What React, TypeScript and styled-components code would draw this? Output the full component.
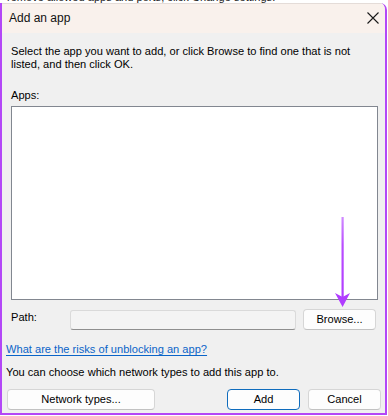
import React from "react";
import styled, { createGlobalStyle } from "styled-components";

const Global = createGlobalStyle`
  html, body { margin: 0; padding: 0; background: #ffffff; }
  body { font-family: "Liberation Sans", Arial, sans-serif; color: #000; }
  * { box-sizing: border-box; }
`;

const Screen = styled.div`
  width: 388px;
  height: 416px;
  background: #ffffff;
  overflow: hidden;
  display: flex;
  flex-direction: column;
`;

const Backdrop = styled.div`
  height: 3px;
  overflow: hidden;
  padding-left: 7px;
  flex: none;
`;

const BackdropText = styled.div`
  font-size: 11.1px;
  line-height: 13px;
  margin-top: -9px;
  white-space: nowrap;
  color: #1a1a1a;
`;

const Window = styled.div`
  position: relative;
  flex: none;
  height: 412px;
  margin-right: 1px;
  border: 2px solid #b347f7;
  border-top: none;
  border-top-right-radius: 7px;
  background: #f0f0f0;
  display: flex;
  flex-direction: column;
  overflow: hidden;
`;

const TitleBar = styled.div`
  height: 30px;
  flex: none;
  background: #f9f1ec;
  display: flex;
  align-items: center;
  justify-content: space-between;
  padding: 0 6px 0 7px;
  border-top: 1px solid #e4dcd8;
`;

const Title = styled.div`
  font-size: 12px;
  line-height: 16px;
  color: #111;
  margin-top: -1px;
`;

const CloseIcon = styled.svg`
  width: 12px;
  height: 12px;
  display: block;
  margin-top: -1px;
`;

const Body = styled.div`
  flex: 1;
  display: flex;
  flex-direction: column;
  padding: 12px 4px 0 4px;
  font-size: 11.1px;
  line-height: 13px;
`;

const Indented = styled.div`
  margin: 0 3px 0 5px;
  display: flex;
  flex-direction: column;
`;

const Text = styled.div<{ $mt?: number }>`
  margin-top: ${(p) => p.$mt ?? 0}px;
  white-space: nowrap;
`;

const ListBox = styled.div`
  margin-top: 4px;
  height: 194px;
  background: #ffffff;
  border: 1px solid #828790;
`;

const PathRow = styled.div`
  margin-top: 9px;
  display: flex;
  align-items: flex-start;
  height: 21px;
`;

const PathLabel = styled.div`
  width: 59px;
  flex: none;
  padding-top: 2px;
`;

const PathInput = styled.div`
  flex: none;
  width: 226px;
  height: 20px;
  margin-top: 1px;
  background: #f4f4f4;
  border: 1px solid #dadada;
  border-bottom-color: #8f8f8f;
  border-radius: 3px;
`;

const Button = styled.button<{ $w: number; $primary?: boolean }>`
  width: ${(p) => p.$w}px;
  height: 21px;
  flex: none;
  padding: 0;
  font-family: inherit;
  font-size: 11.1px;
  line-height: 13px;
  color: #000;
  background: #fdfdfd;
  border: 1px solid ${(p) => (p.$primary ? "#0f6cbd" : "#d6d6d6")};
  border-bottom-color: ${(p) => (p.$primary ? "#0f6cbd" : "#c2c2c2")};
  border-radius: 4px;
  display: flex;
  align-items: center;
  justify-content: center;
`;

const BrowseButton = styled(Button)`
  margin-left: 7px;
`;

const Link = styled.a`
  margin-top: 13px;
  color: #0a64c8;
  text-decoration: underline;
  text-underline-offset: 2px;
  cursor: pointer;
  align-self: flex-start;
`;

const ButtonRow = styled.div`
  margin-top: 10px;
  padding-left: 1px;
  display: flex;
  align-items: center;
  gap: 8px;
`;

const Spacer = styled.div`
  flex: 1;
`;

const Arrow = styled.svg`
  position: absolute;
  left: 331px;
  top: 211px;
  width: 20px;
  height: 95px;
`;

export default function App() {
  return (
    <>
      <Global />
      <Screen>
        <Backdrop>
          <BackdropText>remove allowed apps and ports, click Change settings.</BackdropText>
        </Backdrop>
        <Window>
          <TitleBar>
            <Title>Add an app</Title>
            <CloseIcon viewBox="0 0 12 12">
              <path d="M0.5 0.5 L11.5 11.5 M11.5 0.5 L0.5 11.5" stroke="#1a1a1a" strokeWidth="1.1" fill="none" />
            </CloseIcon>
          </TitleBar>
          <Body>
            <Indented>
              <Text>Select the app you want to add, or click Browse to find one that is not</Text>
              <Text>listed, and then click OK.</Text>
              <Text $mt={18}>Apps:</Text>
              <ListBox />
              <PathRow>
                <PathLabel>Path:</PathLabel>
                <PathInput />
                <BrowseButton $w={73}>Browse...</BrowseButton>
              </PathRow>
            </Indented>
            <Link>What are the risks of unblocking an app?</Link>
            <Text $mt={10}>You can choose which network types to add this app to.</Text>
            <ButtonRow>
              <Button $w={148}>Network types...</Button>
              <Spacer />
              <Button $w={73} $primary>
                Add
              </Button>
              <Button $w={73}>Cancel</Button>
            </ButtonRow>
          </Body>
          <Arrow viewBox="0 0 20 95">
            <defs>
              <linearGradient id="arrowGrad" x1="0" y1="0" x2="0" y2="1">
                <stop offset="0" stopColor="#cf8bff" />
                <stop offset="0.35" stopColor="#b94dff" />
                <stop offset="1" stopColor="#b03cff" />
              </linearGradient>
            </defs>
            <rect x="8.5" y="3" width="2.2" height="80" fill="url(#arrowGrad)" />
            <polygon points="2,79 9.6,93 17,79 9.6,83" fill="#b03cff" />
          </Arrow>
        </Window>
      </Screen>
    </>
  );
}
